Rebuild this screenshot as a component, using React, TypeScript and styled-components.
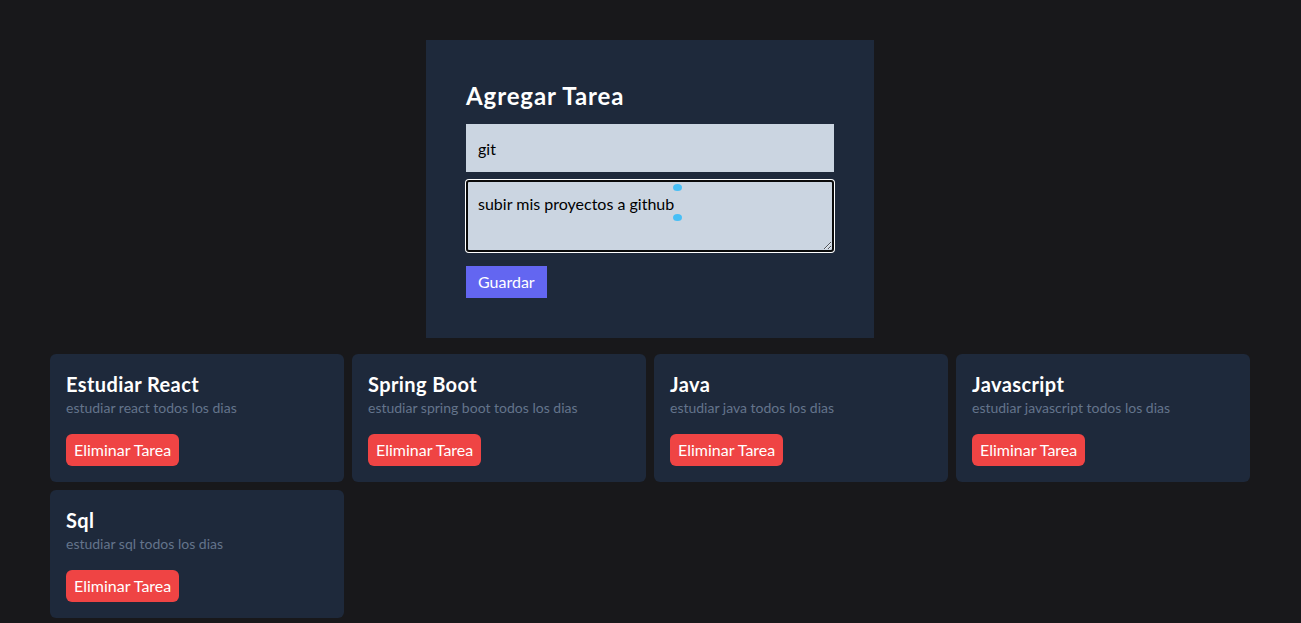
import React, { useState } from "react";
import styled, { createGlobalStyle } from "styled-components";

const GlobalStyle = createGlobalStyle`
  * { box-sizing: border-box; }
  html, body { margin: 0; padding: 0; }
  body {
    background: #18181b;
    font-family: "Segoe UI", Lato, "Noto Sans", sans-serif;
    color: #fff;
    line-height: 1.5;
    padding-right: 1px;
  }
`;

const Page = styled.main`
  max-width: 1280px;
  margin: 0 auto;
  padding: 40px 40px 0;
`;

const FormPanel = styled.form`
  width: 448px;
  margin: 0 auto 16px;
  background: #1e293b;
  padding: 40px;
  display: flex;
  flex-direction: column;
  align-items: flex-start;
`;

const FormTitle = styled.h1`
  margin: 0 0 12px;
  font-size: 24px;
  line-height: 32px;
  font-weight: 700;
  letter-spacing: 0.9px;
  color: #fff;
`;

const TextInput = styled.input`
  width: 100%;
  height: 48px;
  margin: 0 0 8px;
  padding: 12px;
  border: none;
  outline: none;
  background: #cbd5e1;
  color: #000;
  font: inherit;
  font-size: 16px;
`;

const AreaWrap = styled.div`
  position: relative;
  width: 100%;
  margin-bottom: 14px;
`;

const TextArea = styled.textarea`
  display: block;
  width: 100%;
  height: 72px;
  padding: 10px;
  border: 2px solid #0a0a0a;
  border-radius: 3px;
  box-shadow: 0 0 0 1px #ffffff;
  outline: none;
  background: #cbd5e1;
  color: #000;
  font: inherit;
  font-size: 16px;
  line-height: 24px;
`;

const Handle = styled.span<{ $top: number }>`
  position: absolute;
  left: 207px;
  top: ${(p) => p.$top}px;
  width: 9px;
  height: 7px;
  border-radius: 50%;
  background: #38bdf8;
  opacity: 0.9;
`;

const SaveButton = styled.button`
  background: #6366f1;
  color: #fff;
  border: none;
  padding: 4px 12px;
  height: 32px;
  font: inherit;
  font-size: 16px;
  line-height: 24px;
  cursor: pointer;
`;

const Grid = styled.section`
  display: grid;
  grid-template-columns: repeat(4, 1fr);
  gap: 8px;
`;

const Card = styled.article`
  background: #1e293b;
  border-radius: 6px;
  padding: 16px;
`;

const CardTitle = styled.h2`
  margin: 0;
  font-size: 20px;
  line-height: 28px;
  font-weight: 700;
  letter-spacing: 0.4px;
  color: #fff;
`;

const CardDesc = styled.p`
  margin: 0;
  font-size: 14px;
  line-height: 20px;
  color: #64748b;
`;

const DeleteButton = styled.button`
  margin-top: 16px;
  background: #ef4444;
  color: #fff;
  border: none;
  border-radius: 6px;
  padding: 4px 8px;
  height: 32px;
  font: inherit;
  font-size: 16px;
  line-height: 24px;
  cursor: pointer;
`;

const tasks = [
  { id: 1, title: "Estudiar React", description: "estudiar react todos los dias" },
  { id: 2, title: "Spring Boot", description: "estudiar spring boot todos los dias" },
  { id: 3, title: "Java", description: "estudiar java todos los dias" },
  { id: 4, title: "Javascript", description: "estudiar javascript todos los dias" },
  { id: 5, title: "Sql", description: "estudiar sql todos los dias" },
];

export default function App() {
  const [title, setTitle] = useState("git");
  const [desc, setDesc] = useState("subir mis proyectos a github");
  return (
    <>
      <GlobalStyle />
      <Page>
        <FormPanel onSubmit={(e) => e.preventDefault()}>
          <FormTitle>Agregar Tarea</FormTitle>
          <TextInput value={title} onChange={(e) => setTitle(e.target.value)} placeholder="Escribe tu tarea" />
          <AreaWrap>
            <TextArea value={desc} onChange={(e) => setDesc(e.target.value)} placeholder="Escribe la descripcion de la tarea" />
            <Handle $top={4} />
            <Handle $top={34} />
          </AreaWrap>
          <SaveButton type="submit">Guardar</SaveButton>
        </FormPanel>
        <Grid>
          {tasks.map((t) => (
            <Card key={t.id}>
              <CardTitle>{t.title}</CardTitle>
              <CardDesc>{t.description}</CardDesc>
              <DeleteButton>Eliminar Tarea</DeleteButton>
            </Card>
          ))}
        </Grid>
      </Page>
    </>
  );
}
